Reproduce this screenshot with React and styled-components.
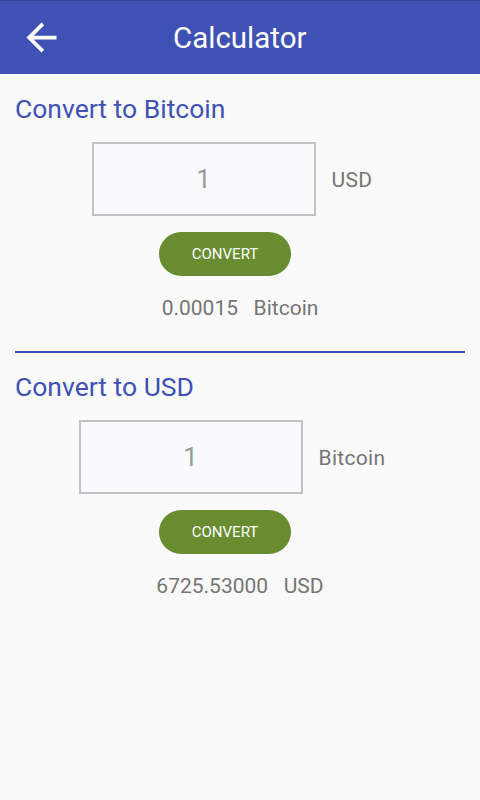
import React, { useState } from "react";
import styled, { createGlobalStyle } from "styled-components";

const GlobalStyle = createGlobalStyle`
  html, body {
    margin: 0;
    padding: 0;
    background: #fafafa;
    font-family: Roboto, "Liberation Sans", sans-serif;
  }
`;

const Screen = styled.div`
  width: 480px;
  height: 800px;
  background: #fafafa;
  display: flex;
  flex-direction: column;
`;

const AppBar = styled.header`
  height: 74px;
  box-sizing: border-box;
  border-top: 1px solid #36459e;
  background: #3f51b5;
  display: flex;
  align-items: center;
  padding-left: 19px;
`;

const BackButton = styled.button`
  width: 45px;
  height: 45px;
  padding: 0;
  border: none;
  background: none;
  display: flex;
  cursor: pointer;
`;

const Title = styled.h1`
  margin: 0 0 0 109px;
  color: #fff;
  font-size: 29.5px;
  font-weight: 400;
`;

const Section = styled.section`
  display: flex;
  flex-direction: column;
  align-items: center;
  padding: ${(p) => p.$top}px 0 0;
`;

const Heading = styled.h2`
  align-self: stretch;
  margin: 0 0 18px 15px;
  color: #3f51b5;
  font-size: 26.5px;
  font-weight: 400;
  line-height: 30px;
`;

const InputRow = styled.div`
  display: flex;
  align-items: center;
`;

const AmountInput = styled.input`
  width: 224px;
  height: 74px;
  margin: 0;
  box-sizing: border-box;
  border: 2px solid #c2c2c2;
  background: #f9f9fe;
  text-align: center;
  font-family: inherit;
  font-size: 26px;
  color: #9a9a9a;
  outline: none;
`;

const Unit = styled.span`
  padding: 2px 16px 0;
  font-size: 21px;
  letter-spacing: 0.3px;
  color: #757575;
`;

const ConvertButton = styled.button`
  margin: 16px 30px 0 0;
  width: 132px;
  height: 44px;
  padding: 0;
  border: none;
  border-radius: 22px;
  background: #688c2f;
  color: #fff;
  font-family: inherit;
  font-size: 15px;
  cursor: pointer;
`;

const Result = styled.div`
  margin-top: 20px;
  font-size: 21px;
  color: #757575;
  line-height: 24px;
  white-space: pre;
`;

const Divider = styled.hr`
  margin: 31px 15px 0;
  height: 2px;
  border: none;
  background: #3f51b5;
`;

const BackArrow = () => (
  <svg width="45" height="45" viewBox="0 0 24 24">
    <path
      fill="#fff"
      d="M20 11H7.83l5.59-5.59L12 4l-8 8 8 8 1.41-1.41L7.83 13H20v-2z"
    />
  </svg>
);

const Converter = ({ title, unit, result, resultUnit, top }) => {
  const [value, setValue] = useState("1");
  return (
    <Section $top={top}>
      <Heading>{title}</Heading>
      <InputRow>
        <AmountInput value={value} onChange={(e) => setValue(e.target.value)} />
        <Unit>{unit}</Unit>
      </InputRow>
      <ConvertButton>CONVERT</ConvertButton>
      <Result>{`${result}   ${resultUnit}`}</Result>
    </Section>
  );
};

export default function App() {
  return (
    <Screen>
      <GlobalStyle />
      <AppBar>
        <BackButton aria-label="Back">
          <BackArrow />
        </BackButton>
        <Title>Calculator</Title>
      </AppBar>
      <Converter
        top={20}
        title="Convert to Bitcoin"
        unit="USD"
        result="0.00015"
        resultUnit="Bitcoin"
      />
      <Divider />
      <Converter
        top={19}
        title="Convert to USD"
        unit="Bitcoin"
        result="6725.53000"
        resultUnit="USD"
      />
    </Screen>
  );
}
